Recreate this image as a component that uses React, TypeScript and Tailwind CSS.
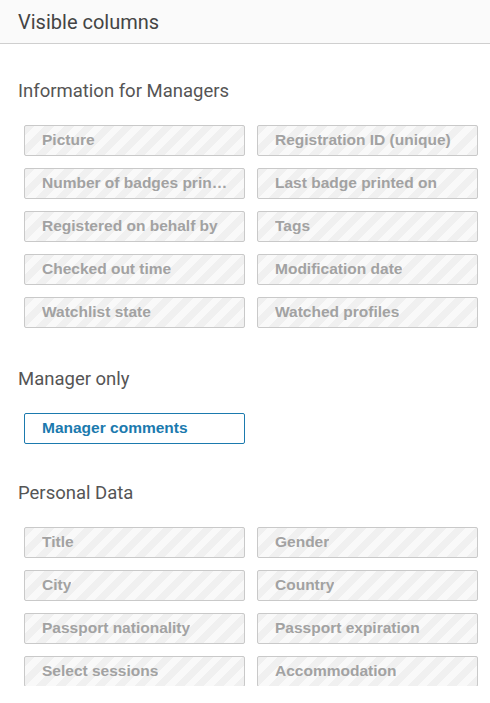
const sections: { title: string; gapAfter: string; items: { label: string; active?: boolean }[] }[] = [
  {
    title: 'Information for Managers',
    gapAfter: 'mb-[39px]',
    items: [
      { label: 'Picture' },
      { label: 'Registration ID (unique)' },
      { label: 'Number of badges printed' },
      { label: 'Last badge printed on' },
      { label: 'Registered on behalf by' },
      { label: 'Tags' },
      { label: 'Checked out time' },
      { label: 'Modification date' },
      { label: 'Watchlist state' },
      { label: 'Watched profiles' },
    ],
  },
  {
    title: 'Manager only',
    gapAfter: 'mb-[37px]',
    items: [{ label: 'Manager comments', active: true }],
  },
  {
    title: 'Personal Data',
    gapAfter: 'mb-[37px]',
    items: [
      { label: 'Title' },
      { label: 'Gender' },
      { label: 'City' },
      { label: 'Country' },
      { label: 'Passport nationality' },
      { label: 'Passport expiration' },
      { label: 'Select sessions' },
      { label: 'Accommodation' },
    ],
  },
];

const ColumnChip = ({ label, active }: { label: string; active?: boolean }) => {
  if (active) {
    return (
      <div className="h-[31px] min-w-0 rounded-[2px] border border-[#1b7aae] bg-white pl-[17px] pr-[14px] pb-[2px] flex items-center">
        <span className="truncate text-[15.5px] font-bold text-[#1b7aae] font-[Liberation_Sans,Arial,sans-serif]">
          {label}
        </span>
      </div>
    );
  }
  return (
    <div className="h-[31px] min-w-0 rounded-[2px] border border-[#c9c9c9] pl-[17px] pr-[14px] pb-[2px] flex items-center bg-[repeating-linear-gradient(135deg,#f0f0f0_0px,#f0f0f0_7px,#f9f9f9_7px,#f9f9f9_14px)]">
      <span className="truncate text-[15.5px] font-bold text-[#a2a2a2] font-[Liberation_Sans,Arial,sans-serif]">
        {label}
      </span>
    </div>
  );
};

export default function App() {
  return (
    <div className="w-[490px] h-[703px] bg-white flex flex-col font-['Roboto',sans-serif]">
      <div className="h-[44px] shrink-0 bg-[#fafafa] border-b border-[#cfcfcf] flex items-center pl-[18px]">
        <h1 className="text-[20px] leading-[24px] text-[#444]">Visible columns</h1>
      </div>

      <div className="flex-1 overflow-hidden">
        <div className="pt-[35px]">
          {sections.map((section) => (
            <div key={section.title} className={section.gapAfter}>
              <h2 className="pl-[18px] text-[18.5px] leading-[24px] text-[#555]">{section.title}</h2>
              <div className="mt-[22px] pl-[24px] pr-[12px] grid grid-cols-[221px_221px] gap-x-[12px] gap-y-[12px]">
                {section.items.map((item) => (
                  <ColumnChip key={item.label} label={item.label} active={item.active} />
                ))}
              </div>
            </div>
          ))}
        </div>
      </div>

      <div className="h-[17px] shrink-0 bg-white" />
    </div>
  );
}
